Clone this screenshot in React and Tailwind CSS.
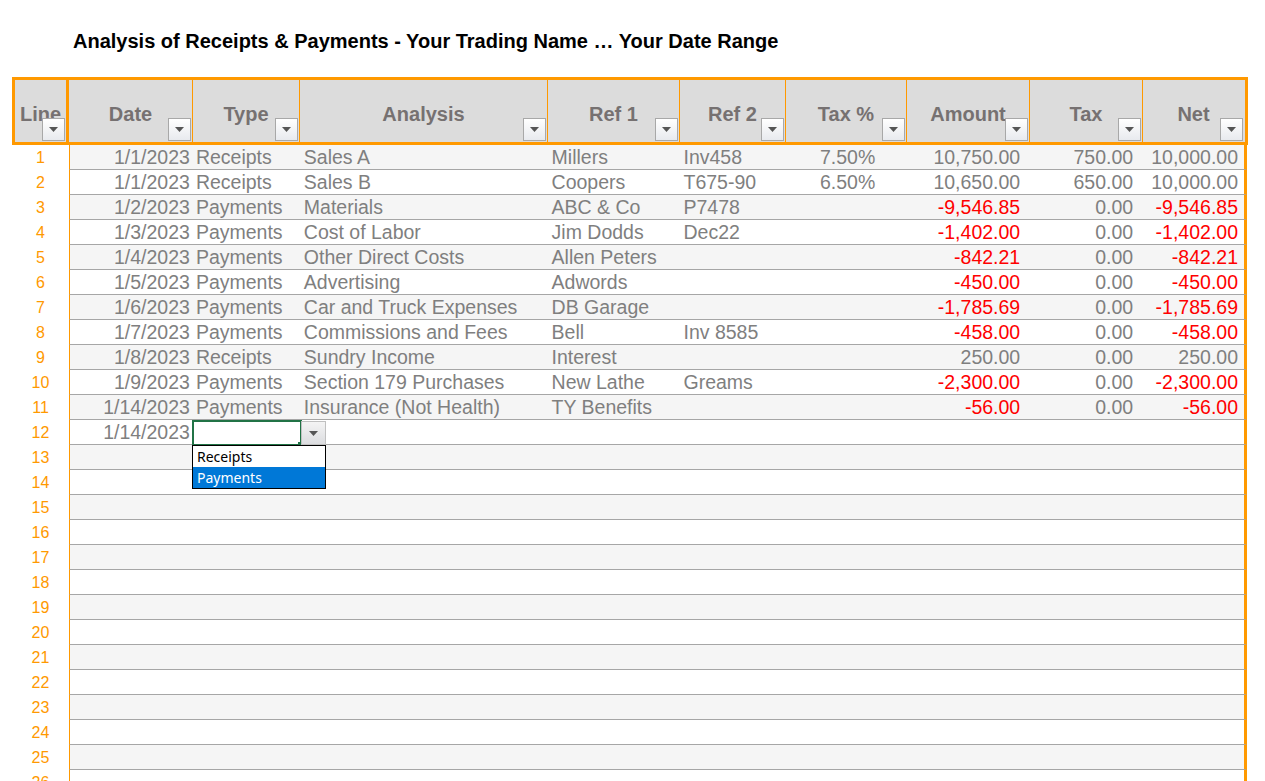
const cols = [
  { name: "Line", w: 57 },
  { name: "Date", w: 124 },
  { name: "Type", w: 107 },
  { name: "Analysis", w: 248 },
  { name: "Ref 1", w: 132 },
  { name: "Ref 2", w: 106 },
  { name: "Tax %", w: 121 },
  { name: "Amount", w: 123 },
  { name: "Tax", w: 113 },
  { name: "Net", w: 104 },
];

const rows = [
  ["1/1/2023", "Receipts", "Sales A", "Millers", "Inv458", "7.50%", "10,750.00", "750.00", "10,000.00"],
  ["1/1/2023", "Receipts", "Sales B", "Coopers", "T675-90", "6.50%", "10,650.00", "650.00", "10,000.00"],
  ["1/2/2023", "Payments", "Materials", "ABC & Co", "P7478", "", "-9,546.85", "0.00", "-9,546.85"],
  ["1/3/2023", "Payments", "Cost of Labor", "Jim Dodds", "Dec22", "", "-1,402.00", "0.00", "-1,402.00"],
  ["1/4/2023", "Payments", "Other Direct Costs", "Allen Peters", "", "", "-842.21", "0.00", "-842.21"],
  ["1/5/2023", "Payments", "Advertising", "Adwords", "", "", "-450.00", "0.00", "-450.00"],
  ["1/6/2023", "Payments", "Car and Truck Expenses", "DB Garage", "", "", "-1,785.69", "0.00", "-1,785.69"],
  ["1/7/2023", "Payments", "Commissions and Fees", "Bell", "Inv 8585", "", "-458.00", "0.00", "-458.00"],
  ["1/8/2023", "Receipts", "Sundry Income", "Interest", "", "", "250.00", "0.00", "250.00"],
  ["1/9/2023", "Payments", "Section 179 Purchases", "New Lathe", "Greams", "", "-2,300.00", "0.00", "-2,300.00"],
  ["1/14/2023", "Payments", "Insurance (Not Health)", "TY Benefits", "", "", "-56.00", "0.00", "-56.00"],
  ["1/14/2023", "", "", "", "", "", "", "", ""],
];

function Arrow() {
  return (
    <div className="absolute bottom-[1px] right-[1px] flex h-[23px] w-[23px] items-center justify-center border border-[#a8a8a8] bg-gradient-to-b from-white to-[#e8eaee]">
      <svg width="9" height="5" viewBox="0 0 9 5"><path d="M0 0h9L4.5 5z" fill="#555" /></svg>
    </div>
  );
}

export default function App() {
  const total = 26;
  return (
    <div className="h-[781px] w-[1265px] overflow-hidden bg-white" style={{ fontFamily: '"Liberation Sans", Arial, sans-serif' }}>
      <div className="h-[77px] pl-[73px] pt-[26px] text-[20px] font-bold text-black">
        Analysis of Receipts &amp; Payments - Your Trading Name … Your Date Range
      </div>
      <div className="ml-[12px] flex h-[68px] w-[1236px] border-[3px] border-[#ff9900] bg-[#dcdcdc]">
        {cols.map((c, i) => (
          <div
            key={c.name}
            className={`relative flex items-start justify-center pt-[19px] text-[20px] font-bold text-[#767171] ${i === 0 ? "border-r-[3px] border-[#ff9900]" : i < cols.length - 1 ? "border-r border-[#ff9900]" : ""}`}
            style={{ width: i === 0 ? c.w - 3 : i === cols.length - 1 ? c.w - 3 : c.w }}
          >
            {c.name}
            <Arrow />
          </div>
        ))}
      </div>
      <div className="relative">
        {Array.from({ length: total }).map((_, r) => {
          const d = rows[r];
          return (
            <div key={r} className="flex h-[25px] text-[19.5px] leading-[25px]">
              <div className="pl-[12px] text-center text-[16px] text-[#ff9900]" style={{ width: 69 }}>{r + 1}</div>
              <div className={`flex w-[1178px] border-b border-l border-r-[3px] border-b-[#a6a6a6] border-l-[#ff9900] border-r-[#ff9900] text-[#7f7f7f] ${r % 2 === 0 ? "bg-[#f5f5f5]" : "bg-white"}`}>
                {d && (
                  <>
                    <div className="w-[123px] whitespace-nowrap pr-[3px] text-right">{d[0]}</div>
                    <div className={`w-[107px] whitespace-nowrap pl-[3px] ${r === 11 ? "relative bg-white" : ""}`}>{d[1]}</div>
                    <div className="w-[248px] whitespace-nowrap pl-[4px]">{d[2]}</div>
                    <div className="w-[132px] whitespace-nowrap pl-[4px]">{d[3]}</div>
                    <div className="w-[106px] whitespace-nowrap pl-[4px]">{d[4]}</div>
                    <div className="w-[121px] whitespace-nowrap pr-[31px] text-right">{d[5]}</div>
                    <div className={`w-[123px] whitespace-nowrap pr-[9px] text-right ${d[6].startsWith("-") ? "text-[#ff0000]" : ""}`}>{d[6]}</div>
                    <div className="w-[113px] whitespace-nowrap pr-[9px] text-right">{d[7]}</div>
                    <div className={`w-[102px] whitespace-nowrap pr-[6px] text-right ${d[8].startsWith("-") ? "text-[#ff0000]" : ""}`}>{d[8]}</div>
                  </>
                )}
              </div>
            </div>
          );
        })}
        <div className="absolute left-[192px] top-[275px] h-[26px] w-[110px] border-2 border-[#217346]">
          <div className="absolute -bottom-[3px] -right-[3px] h-[5px] w-[5px] bg-[#217346]" />
        </div>
        <div className="absolute left-[301px] top-[276px] flex h-[24px] w-[25px] items-center justify-center border border-[#c0c0c0] bg-gradient-to-b from-[#f4f4f4] to-[#dcdde0]">
          <svg width="9" height="5" viewBox="0 0 9 5"><path d="M0 0h9L4.5 5z" fill="#555" /></svg>
        </div>
        <div className="absolute left-[192px] top-[300px] w-[134px] border border-black bg-white text-[14px] leading-[21px] text-black" style={{ fontFamily: '"Noto Sans", "Open Sans", sans-serif' }}>
          <div className="pl-[4px]">Receipts</div>
          <div className="bg-[#0078d7] pl-[4px] text-white">Payments</div>
        </div>
      </div>
    </div>
  );
}
